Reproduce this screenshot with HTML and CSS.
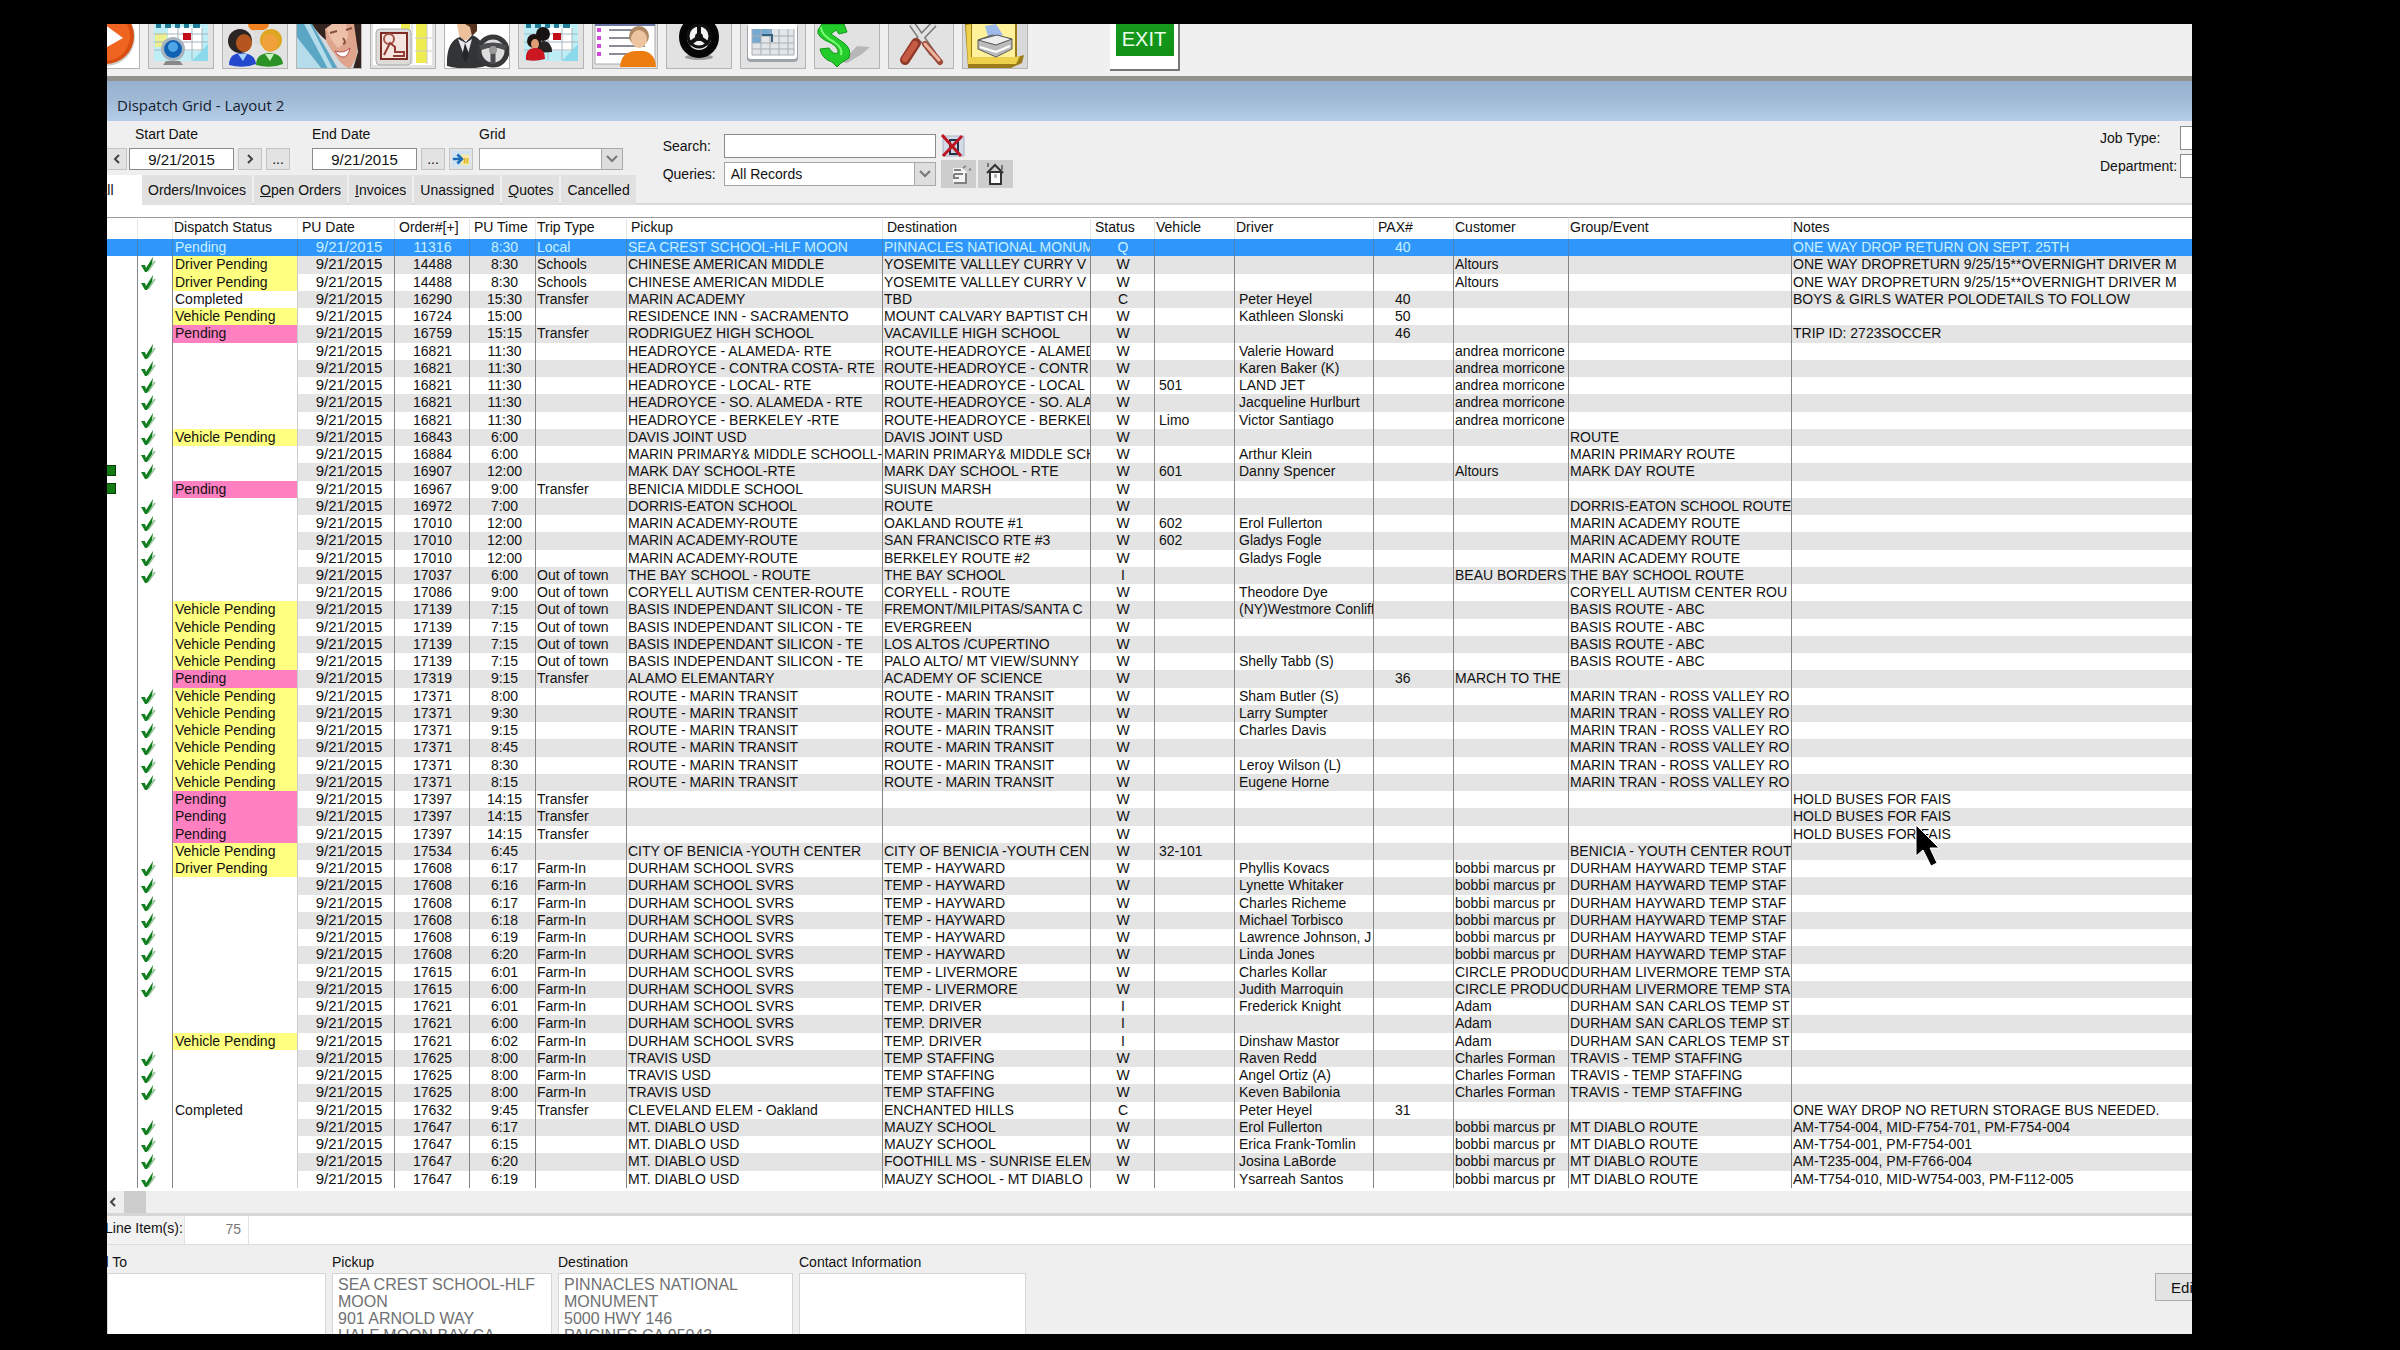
FILE: index.html
```html
<!DOCTYPE html>
<html lang="en">
<head>
<meta charset="utf-8">
<title>Dispatch Grid - Layout 2</title>
<link rel="stylesheet" href="styles.css">
</head>
<body>
<main class="window">
  <nav class="toolbar" aria-label="Main toolbar">
    <button class="tool tool-first" type="button" aria-label="Start"><svg viewBox="0 0 66 45"><rect width="66" height="45" fill="#fff"/><circle cx="32" cy="13" r="29" fill="#ccc"/><circle cx="32" cy="12" r="28" fill="#d94e10"/><circle cx="31" cy="12" r="25" fill="#ee6420"/><path d="M22-6 49 14 22 29z" fill="#fff"/></svg></button>
    <button class="tool" type="button" aria-label="Schedule"><svg viewBox="0 0 66 45"><path d="M6 0h54v37H6z" fill="#bdeef5"/><path d="M20 3h34v24H20z" fill="#fff"/><path d="M7 9h12v14H7z" fill="#eef090"/><path d="M8 2h5m4 0h6m4 0h5m4 0h5m4 0h7" stroke="#227d96" stroke-width="4"/><path d="M6 10h54M6 18h54M6 26h54M30 4v32M44 4v32M54 4v32" stroke="#a5b6c0"/><path d="M44 37 60 20v17z" fill="#8bd9ea"/><path d="M35 9h8v7h-8z" fill="#c40d18"/><path d="M18 37h14l3 4H15z" fill="#888"/><circle cx="25" cy="25" r="12" fill="#a7b3bd"/><circle cx="25" cy="25" r="9" fill="#1262b4"/><circle cx="25" cy="23" r="5" fill="#4fa6e7"/></svg></button>
    <button class="tool" type="button" aria-label="Customers"><svg viewBox="0 0 66 45"><path d="M26 0h21q0 6-11 7-10 0-10-7z" fill="#f28220"/><path d="M32 6h9v15h-9z" fill="#ddd"/><circle cx="18" cy="17" r="12" fill="#2b2523"/><ellipse cx="22" cy="19" rx="8" ry="9" fill="#b5551f"/><path d="M7 41q0-11 11-12 15 0 16 11-12 5-27 1z" fill="#2449cf"/><path d="m16 30 5 7 4-7z" fill="#a9d2fb"/><circle cx="49" cy="16" r="11" fill="#dfa623"/><ellipse cx="48" cy="19" rx="8" ry="9" fill="#f0a13b"/><path d="M34 41q0-11 12-12 14 0 15 11-12 5-27 1z" fill="#2c9226"/><path d="m43 30 5 7 4-7z" fill="#c8f5c0"/></svg></button>
    <button class="tool" type="button" aria-label="Call taker"><svg viewBox="0 0 66 45"><path d="M0 0h66v45H0z" fill="#d5d9dd"/><path d="M0 0h16l26 45H0z" fill="#5aa6c4"/><path d="M0 12 26 45H0zM8 0l24 45h5L14 0z" fill="#b4dcea"/><path d="M24 0h34q6 18 2 34l-6 11q-9-4-14-13Q28 18 24 0z" fill="#dfa58c"/><path d="M30 0h20q4 10 0 18l-8 6Q32 14 30 0z" fill="#edc0aa"/><path d="M16 0h20l-7 5 1 11q-8-6-14-16zM58 0h8v45h-9l5-17z" fill="#34241f"/><path d="M39 27q9 3 15-3-2 10-8 9-5-1-7-6z" fill="#fff" stroke="#b4514d"/><path d="M47 14q4 5 0 6M34 9l7-2M50 6l6-2" stroke="#84513e" stroke-width="2" fill="none"/></svg></button>
    <button class="tool" type="button" aria-label="Reports"><svg viewBox="0 0 66 45"><path d="M3 0h59v41H3z" fill="#fff"/><path d="M46 0h11v39H46zM31 0h9v5h-9z" fill="#eeec4f"/><path d="M57 0v40M42 0v40M45 14h17M45 27h17" stroke="#ccc"/><rect x="6" y="5" width="35" height="36" rx="4" fill="#dedcd9" stroke="#aaa"/><path d="M11 9h26v26H11z" fill="#f6e4df" stroke="#7e2b25" stroke-width="2"/><circle cx="19" cy="15" r="5" fill="none" stroke="#a65348" stroke-width="2"/><path d="m14 31 6-12 5 4v5h9v4H23" stroke="#943c34" stroke-width="2" fill="none"/></svg></button>
    <button class="tool" type="button" aria-label="Drivers"><svg viewBox="0 0 66 45"><path d="M0 0h66v45H0z" fill="#fff"/><path d="M13 0h16l-1 10-5 6h-7z" fill="#ecc09b"/><path d="M21 0h12v7l-5 5-2-9z" fill="#55331f"/><path d="M3 42q-1-25 13-29l6 5 6-7q15 5 14 31-20 5-39 0z" fill="#333436"/><path d="m14 15 8 22 6-22-6 4z" fill="#e8e8ec"/><path d="m21 19-3 13 4 7 3-9z" fill="#25262a"/><circle cx="49" cy="27" r="14" fill="#ddd" stroke="#37393b" stroke-width="5"/><path d="M36 24q13-6 26 0M49 26v14" stroke="#4c4d50" stroke-width="5"/><circle cx="49" cy="26" r="4" fill="#999"/></svg></button>
    <button class="tool" type="button" aria-label="Groups"><svg viewBox="0 0 66 45"><path d="M6 0h54v37H6z" fill="#bdeef5"/><path d="M20 3h34v24H20z" fill="#fff"/><path d="M8 2h5m4 0h6m4 0h5m4 0h5m4 0h7" stroke="#227d96" stroke-width="4"/><path d="M6 10h54M6 18h54M6 26h54M30 4v32M44 4v32M54 4v32" stroke="#a5b6c0"/><path d="M44 37 60 20v17z" fill="#8bd9ea"/><path d="M35 9h8v7h-8z" fill="#c40d18"/><circle cx="25" cy="10" r="7" fill="#171314"/><path d="M18 29q0-12 8-12 8 1 8 11z" fill="#252323"/><circle cx="16" cy="17" r="7" fill="#1f1312"/><ellipse cx="17" cy="20" rx="4" ry="5" fill="#df9f76"/><path d="M8 36q-1-12 9-12 10 0 10 11-10 3-19 1z" fill="#cc1722"/></svg></button>
    <button class="tool" type="button" aria-label="Contacts"><svg viewBox="0 0 66 45"><path d="M3 0h60v40H3z" fill="#fff" stroke="#aaa"/><path d="M3 1h60" stroke="#6d78a5" stroke-width="2"/><path d="M5 6h4m-4 8h4m-4 8h4m-4 8h4" stroke="#d24ad6" stroke-width="4"/><path d="M17 6h36M17 14h36M17 22h36M17 30h24" stroke="#8a8d98" stroke-width="2"/><circle cx="47" cy="12" r="10" fill="#ad8964"/><ellipse cx="47" cy="15" rx="8" ry="9" fill="#ecc49d"/><path d="M28 43q1-15 15-16h9q11 2 12 16z" fill="#ee7d0f"/></svg></button>
    <button class="tool" type="button" aria-label="Vehicles"><svg viewBox="0 0 66 45"><ellipse cx="33" cy="33" rx="14" ry="3" fill="#999"/><ellipse cx="33" cy="13" rx="16" ry="17" fill="#e8e8e8" stroke="#050505" stroke-width="8"/><circle cx="33" cy="12" r="11" fill="#f3f3f3" stroke="#111" stroke-width="3"/><path d="M33 13V2m0 11-10 7m10-7 10 7" stroke="#111" stroke-width="4"/><circle cx="33" cy="13" r="4" fill="#111"/></svg></button>
    <button class="tool" type="button" aria-label="Calendar"><svg viewBox="0 0 66 45"><rect x="7" y="0" width="51" height="38" rx="4" fill="#9da3a8"/><rect x="8" y="-3" width="49" height="38" rx="3" fill="#fff"/><path d="M12 5h42v26H12z" fill="#e3e6e8"/><path d="M12 5h20v7H21v7h-9z" fill="#76a9d0"/><path d="M12 12h42M12 19h42M12 25h42M12 31h42M21 5v26M30 5v26M39 5v26M48 5v26M12 5v26M54 5v26" stroke="#a7adb2"/><path d="M22 11h10v7" stroke="#356283" stroke-width="2" fill="none"/></svg></button>
    <button class="tool" type="button" aria-label="Accounting"><svg viewBox="0 0 66 45"><path d="m28 38 15-16 13 1-8 7-15 9z" fill="#b7b7b7"/><path d="M4 6 8 0h22l3 8-8 2-3-4-5 4 13 9q8 6 5 15l-8 5-4 4-5-5q-10-3-12-13l9-1q4 7 9 5 1-5-7-10Q2 13 4 6z" fill="#23cb2b" stroke="#129719"/><path d="M7 3q0 8 13 15 9 6 7 13" stroke="#7bff72" stroke-width="2" fill="none"/></svg></button>
    <button class="tool" type="button" aria-label="Settings"><svg viewBox="0 0 66 45"><path d="m24 0 21 30M46 0 24 23" stroke="#777" stroke-width="7"/><path d="m24 0 21 30M46 0 24 23" stroke="#e1e1e1" stroke-width="4"/><path d="m28 19-11 17" stroke="#91392a" stroke-width="10" stroke-linecap="round"/><path d="m27 20-10 15" stroke="#c55b43" stroke-width="6" stroke-linecap="round"/><path d="m37 20 15 18" stroke="#9f4938" stroke-width="6" stroke-linecap="round"/><path d="m37 20 14 16" stroke="#edb4a0" stroke-width="3" stroke-linecap="round"/></svg></button>
    <button class="tool" type="button" aria-label="Print"><svg viewBox="0 0 66 45"><path d="M0 0h66v45H0z" fill="#d9d9dc"/><path d="M3 0h52v33l7-2-2 8-11 5H6z" fill="#9c7c18"/><path d="M10 0h43v33H10z" fill="#fff29b"/><path d="m4 1 5-1v33h44l5-1-4 8H6z" fill="#efd04d"/><path d="m23 2 11-2 7 11-14 5z" fill="#9ebbe9"/><path d="m16 16 14-5 20 4v10L34 33l-18-8z" fill="#bbb" stroke="#5b5c58"/><path d="m16 16 18 5 16-6-15-4z" fill="#eee" stroke="#555"/><path d="m18 23 16 5 14-6" fill="none" stroke="#fff" stroke-width="2"/></svg></button>
    <button class="tool-exit" type="button">EXIT</button>
  </nav>

  <header class="titlebar"><h1>Dispatch Grid - Layout 2</h1></header>

  <section class="filters">
    <div class="filters-left">
      <div class="dates">
        <div class="field">
          <label class="label-start" for="start">Start Date</label>
          <div class="controls">
            <button class="btn btn-prev" type="button" aria-label="Previous day"><svg viewBox="0 0 8 10"><path d="M6 1 2 5l4 4"/></svg></button>
            <input class="box date start" id="start" value="9/21/2015">
            <button class="btn" type="button" aria-label="Next day"><svg viewBox="0 0 8 10"><path d="m2 1 4 4-4 4"/></svg></button>
            <button class="btn" type="button">...</button>
          </div>
        </div>
        <div class="field">
          <label for="end">End Date</label>
          <div class="controls">
            <input class="box date" id="end" value="9/21/2015">
            <button class="btn" type="button">...</button>
            <button class="btn" type="button" aria-label="Refresh"><svg class="refresh" viewBox="0 0 24 22"><path d="M2 2h20v18H2z" fill="#cfe3f4"/><path d="M12 6h9v12h-9z" fill="#f7e9a5"/><path d="M3 11h8M8 6l5 5-5 5" stroke="#1f6fb8" stroke-width="3" fill="none"/><path d="M16 16v-6M19 16v-6" stroke="#e1b429" stroke-width="2"/></svg></button>
          </div>
        </div>
        <div class="field field-grid">
          <label for="grid">Grid</label>
          <div class="select grid-select"><select class="box" id="grid"><option></option></select><span class="drop"><svg viewBox="0 0 12 8"><path d="m1 1 5 5 5-5"/></svg></span></div>
        </div>
      </div>
      <div class="tabs" role="tablist">
        <button class="tab tab-active" role="tab" aria-selected="true" type="button">All</button>
        <button class="tab" role="tab" type="button">Orders/Invoices</button>
        <button class="tab" role="tab" type="button"><u>O</u>pen Orders</button>
        <button class="tab" role="tab" type="button"><u>I</u>nvoices</button>
        <button class="tab" role="tab" type="button">Unassigned</button>
        <button class="tab" role="tab" type="button"><u>Q</u>uotes</button>
        <button class="tab" role="tab" type="button">Cancelled</button>
      </div>
    </div>
    <div class="search">
      <div class="search-row">
        <label for="search">Search:</label>
        <input class="box" id="search">
        <button class="clear" type="button" aria-label="Clear search"><svg viewBox="0 0 26 24"><path d="M3 2h21v20H3z" fill="#d3dbe8" stroke="#a9b2c4"/><path d="M10 6h8v14h-8z" fill="#cdd5df" stroke="#26334c" stroke-width="2"/><path d="M2 1 21 22M22 2 3 22" stroke="#bd1723" stroke-width="3"/></svg></button>
      </div>
      <div class="search-row">
        <label for="queries">Queries:</label>
        <div class="select query-select"><select class="box" id="queries"><option>All Records</option></select><span class="drop"><svg viewBox="0 0 12 8"><path d="m1 1 5 5 5-5"/></svg></span></div>
        <button class="query-btn" type="button" aria-label="Edit query"><svg viewBox="0 0 35 28"><path d="M12 8h9l5 4v11H12z" fill="#f4f4f4"/><path d="M13 10h7m-7 4h9m-9 0v4h5m-5 5h12V13" stroke="#808080" stroke-width="2" fill="none"/><path d="m22 8 3-2m3 4 2-1" stroke="#888" stroke-width="2"/></svg></button>
        <button class="query-btn" type="button" aria-label="Query home"><svg viewBox="0 0 35 28"><path d="M12 12h11v12H12z" fill="#fff" stroke="#333" stroke-width="2"/><path d="m9 13 8-8 8 8" fill="none" stroke="#333" stroke-width="2"/><path d="M10 3v4m14-2v5" stroke="#777" stroke-width="2"/><path d="M16 14h3v4h-3z" fill="#bbb"/></svg></button>
      </div>
    </div>
    <div class="job">
      <div class="job-row"><label for="job">Job Type:</label><input class="box" id="job"></div>
      <div class="job-row"><label for="dept">Department:</label><input class="box" id="dept"></div>
    </div>
  </section>

  <section class="grid-wrap">
    <table class="grid">
      <colgroup><col class="c-mark"><col class="c-check"><col class="c-dispatch"><col class="c-date"><col class="c-order"><col class="c-time"><col class="c-trip"><col class="c-pickup"><col class="c-dest"><col class="c-status"><col class="c-vehicle"><col class="c-driver"><col class="c-pax"><col class="c-customer"><col class="c-group"><col></colgroup>
      <thead><tr><th></th><th></th><th>Dispatch Status</th><th class="in">PU Date</th><th class="in">Order#[+]</th><th class="in">PU Time</th><th>Trip Type</th><th class="in">Pickup</th><th class="in">Destination</th><th class="in">Status</th><th>Vehicle</th><th>Driver</th><th class="in">PAX#</th><th>Customer</th><th>Group/Event</th><th>Notes</th></tr></thead>
      <tbody id="rows"></tbody>
    </table>
    <svg class="pointer" viewBox="0 0 26 44" aria-hidden="true"><path d="M1 1v31l7-6 8 16 6-3-7-15h9z" fill="#000" stroke="#fff"/></svg>
  </section>

  <div class="scrollbar"><button class="scroll-left" type="button" aria-label="Scroll left"><svg viewBox="0 0 8 10"><path d="M6 1 2 5l4 4"/></svg></button><span class="thumb"></span></div>

  <div class="summary"><label for="items">Line Item(s):</label><input id="items" value="75" readonly></div>

  <section class="details">
    <div class="pane pane-bill"><label for="bill">Bill To</label><textarea id="bill" readonly></textarea></div>
    <div class="pane pane-pickup"><label for="pickup">Pickup</label><textarea id="pickup" readonly>SEA CREST SCHOOL-HLF MOON
901 ARNOLD WAY
HALF MOON BAY CA</textarea></div>
    <div class="pane pane-dest"><label for="dest">Destination</label><textarea id="dest" readonly>PINNACLES NATIONAL MONUMENT
5000 HWY 146
PAICINES CA 95043</textarea></div>
    <div class="pane pane-contact"><label for="contact">Contact Information</label><textarea id="contact" readonly></textarea></div>
    <button class="edit" type="button">Edit</button>
  </section>
</main>
<script src="app.js"></script>
</body>
</html>
```
FILE: styles.css
```css
* { box-sizing: border-box; }
body {
  margin: 0;
  padding: 24px 208px 17px 107px;
  background: #000;
  color: #111;
  font: 14px/17px "Liberation Sans", Arial, sans-serif;
}
button, input, select, textarea { font: inherit; color: inherit; margin: 0; border-radius: 0; }
button { padding: 0; white-space: nowrap; }
svg { display: block; }
.window { background: #efefef; overflow: hidden; }

.toolbar {
  display: flex;
  gap: 8px;
  height: 57px;
  background: #f0f0f0;
  border-bottom: 5px solid #92938f;
}
.tool {
  flex: none;
  width: 66px;
  height: 45px;
  background: #e2e2e2;
  border: solid #b4b4b4;
  border-width: 0 1px 1px;
  overflow: hidden;
}
.tool svg { width: 66px; height: 45px; margin: 0 -1px; }
.tool-first { margin-left: -33px; }
.tool-exit {
  width: 70px;
  height: 47px;
  margin-left: 74px;
  border: solid #777;
  border-width: 0 2px 2px 0;
  background: linear-gradient(#159a1e, #119116) no-repeat 6px 0 / 58px 32px #fff;
  color: #eaffea;
  font: 20px/30px "Liberation Sans", Arial, sans-serif;
  padding-bottom: 15px;
}

.titlebar {
  padding: 14px 0 6px 10px;
  background: linear-gradient(#97b0d0, #a1bbd6 50%, #b5cde9);
}
.titlebar h1 { margin: 0; font: 15px/20px "Open Sans", "Noto Sans", sans-serif; color: #14202e; }

.filters {
  display: flex;
  align-items: flex-start;
  height: 84px;
  border-bottom: 2px solid #dadada;
}
.dates { display: flex; padding-top: 3px; }
.field { margin-right: 22px; }
.field + .field { margin-right: 6px; }
.field label { display: block; line-height: 20px; margin-bottom: 4px; }
.field .label-start { padding-left: 28px; }
.controls { display: flex; gap: 4px; }
.box { border: 1px solid #8a8a8a; background: #fff; padding: 0; outline: 0; }
.date { width: 105px; height: 22px; text-align: center; font-size: 15px; }
.start { margin-left: -2px; }
.btn {
  display: grid;
  place-items: center;
  width: 24px;
  height: 22px;
  background: #e3e3e3;
  border: 1px solid #c4c4c4;
}
.btn-prev { width: 20px; border-left: 0; }
.btn svg, .scroll-left svg, .drop svg { width: 8px; height: 10px; fill: none; stroke: #444; stroke-width: 2; }
.btn .refresh { width: 22px; height: 20px; stroke: none; }
.select { display: grid; position: relative; }
.select select { appearance: none; width: 100%; height: 22px; padding-left: 6px; border-color: #a5a5a5; }
.drop {
  position: absolute;
  right: 0;
  top: 0;
  bottom: 0;
  display: grid;
  place-items: center;
  width: 22px;
  background: #dedede;
  border: 1px solid #a9a9a9;
  pointer-events: none;
}
.drop svg { width: 12px; height: 8px; stroke: #777; }
.grid-select { width: 144px; }
.tabs { display: flex; gap: 2px; margin-top: 5px; }
.tab { height: 30px; padding: 0 6px; border: 0; background: #e1e1e1; line-height: 30px; }
.tab-active { width: 35px; margin-right: -2px; padding: 0; background: #fff; text-align: left; text-indent: -9px; line-height: 24px; overflow: hidden; }

.search { display: grid; gap: 2px; margin: 13px 0 0 27px; }
.search-row { display: flex; align-items: center; height: 24px; }
.search-row + .search-row { height: 28px; }
.search-row label { width: 61px; }
.search-row input { width: 212px; height: 24px; }
.query-select { width: 212px; margin-right: 5px; }
.query-select select { height: 24px; }
.clear { width: 26px; height: 24px; margin-left: 4px; border: 0; background: none; }
.query-btn { width: 35px; height: 28px; margin-right: 2px; border: 0; background: #cdcdcd; }

.job { display: grid; gap: 4px; margin: 5px 0 0 auto; }
.job-row { display: flex; align-items: center; height: 24px; }
.job-row label { width: 80px; }
.job-row input { width: 12px; height: 24px; border-right: 0; }

.grid-wrap { position: relative; padding: 12px 0 3px; background: #fff; }
.grid { width: 100%; table-layout: fixed; border-collapse: separate; border-spacing: 0; }
.c-mark { width: 31px; }
.c-check { width: 35px; }
.c-dispatch { width: 125px; }
.c-date { width: 97px; }
.c-order { width: 75px; }
.c-time { width: 66px; }
.c-trip { width: 91px; }
.c-pickup { width: 256px; }
.c-dest { width: 208px; }
.c-status { width: 64px; }
.c-vehicle { width: 80px; }
.c-driver { width: 139px; }
.c-pax { width: 80px; }
.c-customer { width: 115px; }
.c-group { width: 223px; }
.grid th {
  height: 22px;
  padding: 0 0 2px 1px;
  border-top: 1px solid #9a9a9a;
  border-right: 1px solid #e6e6e6;
  font-weight: normal;
  text-align: left;
  white-space: nowrap;
  overflow: hidden;
}
.grid th.in { padding-left: 4px; }
.grid td {
  height: 17px;
  padding: 0 0 0 1px;
  border-right: 1px solid #858585;
  line-height: 16px;
  vertical-align: top;
  white-space: nowrap;
  overflow: hidden;
}
.grid tr:nth-child(4n+2) td { height: 18px; }
.grid th:last-child, .grid td:last-child { border-right: 0; }
.grid tr:nth-child(even) td:nth-child(n+4) { background: #e4e4e4; }
.grid td:nth-child(1) { padding: 2px 0 0; }
.grid td:nth-child(2) { padding-left: 2px; }
.grid td:nth-child(3) { padding-left: 2px; border-right-color: #ccc; }
.grid td:nth-child(4) { padding-left: 6px; text-align: center; font-size: 15px; }
.grid td:nth-child(5), .grid td:nth-child(6), .grid td:nth-child(10) { text-align: center; }
.grid td:nth-child(6) { padding-left: 4px; }
.grid td:nth-child(11), .grid td:nth-child(12) { padding-left: 4px; }
.grid td:nth-child(13) { padding-left: 21px; }
.grid .yellow { background: #ffff80; }
.grid .pink { background: #ff80c0; }
.grid .selected td { background: #2f96fc; color: #c9f1ff; border-right-color: #4a83b8; }
.check { width: 16px; height: 16px; }
.mark { display: block; width: 9px; height: 11px; background: #117a11; border: 1px solid #063c06; border-left: 0; }
.pointer { position: absolute; left: 1808px; top: 619px; width: 26px; height: 44px; }

.scrollbar { display: flex; height: 25px; border-bottom: 3px solid #d6d6d6; }
.scroll-left { width: 17px; border: 0; background: none; }
.scroll-left svg { margin-left: 2px; }
.thumb { width: 22px; background: #cdcdcd; }

.summary { display: flex; height: 29px; background: #fff; border-bottom: 1px solid #dcdcdc; line-height: 25px; }
.summary label { width: 77px; background: #f2f2f2; white-space: nowrap; text-indent: -2px; }
.summary input { width: 65px; padding: 0 7px 2px 0; border: solid #e2e2e2; border-width: 0 1px; background: #fff; color: #777; text-align: right; }

.details { display: flex; align-items: flex-start; gap: 6px; height: 89px; overflow: hidden; }
.pane { padding-top: 7px; }
.pane label { display: block; line-height: 20px; margin-bottom: 1px; }
.pane textarea {
  display: block;
  width: 100%;
  height: 80px;
  padding: 2px 5px;
  border: 1px solid #d5d5d5;
  background: #fff;
  color: #6f7173;
  font-size: 16px;
  line-height: 17px;
  resize: none;
  overflow: hidden;
}
.pane-bill { width: 219px; }
.pane-bill label { text-indent: -17px; }
.pane-pickup { width: 220px; }
.pane-dest { width: 235px; }
.pane-contact { width: 227px; }
.edit {
  width: 58px;
  height: 28px;
  margin: 28px -21px 0 auto;
  border: 1px solid #adadad;
  background: #e3e3e3;
  font-size: 15px;
}
```
FILE: app.js
```js
// Fields: flags|dispatch status|order|time|trip|pickup|destination|status|vehicle|driver|pax|customer|group|notes
// Flags: c = confirmed tick, m = green marker at the row start
const data = `
|Pending|11316|8:30|Local|SEA CREST SCHOOL-HLF MOON|PINNACLES NATIONAL MONUM|Q|||40|||ONE WAY DROP RETURN ON SEPT. 25TH
c|Driver Pending|14488|8:30|Schools|CHINESE AMERICAN MIDDLE|YOSEMITE VALLLEY CURRY V|W||||Altours||ONE WAY DROPRETURN 9/25/15**OVERNIGHT DRIVER M
c|Driver Pending|14488|8:30|Schools|CHINESE AMERICAN MIDDLE|YOSEMITE VALLLEY CURRY V|W||||Altours||ONE WAY DROPRETURN 9/25/15**OVERNIGHT DRIVER M
|Completed|16290|15:30|Transfer|MARIN ACADEMY|TBD|C||Peter Heyel|40|||BOYS & GIRLS WATER POLODETAILS TO FOLLOW
|Vehicle Pending|16724|15:00||RESIDENCE INN - SACRAMENTO|MOUNT CALVARY BAPTIST CH|W||Kathleen Slonski|50|||
|Pending|16759|15:15|Transfer|RODRIGUEZ HIGH SCHOOL|VACAVILLE HIGH SCHOOL|W|||46|||TRIP ID: 2723SOCCER
c||16821|11:30||HEADROYCE - ALAMEDA- RTE|ROUTE-HEADROYCE - ALAMED|W||Valerie Howard||andrea morricone||
c||16821|11:30||HEADROYCE - CONTRA COSTA- RTE|ROUTE-HEADROYCE - CONTR|W||Karen Baker (K)||andrea morricone||
c||16821|11:30||HEADROYCE - LOCAL- RTE|ROUTE-HEADROYCE - LOCAL|W|501|LAND JET||andrea morricone||
c||16821|11:30||HEADROYCE - SO. ALAMEDA - RTE|ROUTE-HEADROYCE - SO. ALA|W||Jacqueline Hurlburt||andrea morricone||
c||16821|11:30||HEADROYCE - BERKELEY -RTE|ROUTE-HEADROYCE - BERKEL|W|Limo|Victor Santiago||andrea morricone||
c|Vehicle Pending|16843|6:00||DAVIS JOINT USD|DAVIS JOINT USD|W|||||ROUTE|
c||16884|6:00||MARIN PRIMARY& MIDDLE SCHOOLL-|MARIN PRIMARY& MIDDLE SCH|W||Arthur Klein|||MARIN PRIMARY ROUTE|
cm||16907|12:00||MARK DAY SCHOOL-RTE|MARK DAY SCHOOL - RTE|W|601|Danny Spencer||Altours|MARK DAY ROUTE|
m|Pending|16967|9:00|Transfer|BENICIA MIDDLE SCHOOL|SUISUN MARSH|W||||||
c||16972|7:00||DORRIS-EATON SCHOOL|ROUTE|W|||||DORRIS-EATON SCHOOL ROUTE|
c||17010|12:00||MARIN ACADEMY-ROUTE|OAKLAND ROUTE #1|W|602|Erol Fullerton|||MARIN ACADEMY ROUTE|
c||17010|12:00||MARIN ACADEMY-ROUTE|SAN FRANCISCO RTE #3|W|602|Gladys Fogle|||MARIN ACADEMY ROUTE|
c||17010|12:00||MARIN ACADEMY-ROUTE|BERKELEY ROUTE #2|W||Gladys Fogle|||MARIN ACADEMY ROUTE|
c||17037|6:00|Out of town|THE BAY SCHOOL - ROUTE|THE BAY SCHOOL|I||||BEAU BORDERS|THE BAY SCHOOL ROUTE|
||17086|9:00|Out of town|CORYELL AUTISM CENTER-ROUTE|CORYELL - ROUTE|W||Theodore Dye|||CORYELL AUTISM CENTER ROU|
|Vehicle Pending|17139|7:15|Out of town|BASIS INDEPENDANT SILICON - TE|FREMONT/MILPITAS/SANTA C|W||(NY)Westmore Conliff|||BASIS ROUTE - ABC|
|Vehicle Pending|17139|7:15|Out of town|BASIS INDEPENDANT SILICON - TE|EVERGREEN|W|||||BASIS ROUTE - ABC|
|Vehicle Pending|17139|7:15|Out of town|BASIS INDEPENDANT SILICON - TE|LOS ALTOS /CUPERTINO|W|||||BASIS ROUTE - ABC|
|Vehicle Pending|17139|7:15|Out of town|BASIS INDEPENDANT SILICON - TE|PALO ALTO/ MT VIEW/SUNNY|W||Shelly Tabb (S)|||BASIS ROUTE - ABC|
|Pending|17319|9:15|Transfer|ALAMO ELEMANTARY|ACADEMY OF SCIENCE|W|||36|MARCH TO THE||
c|Vehicle Pending|17371|8:00||ROUTE - MARIN TRANSIT|ROUTE - MARIN TRANSIT|W||Sham Butler (S)|||MARIN TRAN - ROSS VALLEY RO|
c|Vehicle Pending|17371|9:30||ROUTE - MARIN TRANSIT|ROUTE - MARIN TRANSIT|W||Larry Sumpter|||MARIN TRAN - ROSS VALLEY RO|
c|Vehicle Pending|17371|9:15||ROUTE - MARIN TRANSIT|ROUTE - MARIN TRANSIT|W||Charles Davis|||MARIN TRAN - ROSS VALLEY RO|
c|Vehicle Pending|17371|8:45||ROUTE - MARIN TRANSIT|ROUTE - MARIN TRANSIT|W|||||MARIN TRAN - ROSS VALLEY RO|
c|Vehicle Pending|17371|8:30||ROUTE - MARIN TRANSIT|ROUTE - MARIN TRANSIT|W||Leroy Wilson (L)|||MARIN TRAN - ROSS VALLEY RO|
c|Vehicle Pending|17371|8:15||ROUTE - MARIN TRANSIT|ROUTE - MARIN TRANSIT|W||Eugene Horne|||MARIN TRAN - ROSS VALLEY RO|
|Pending|17397|14:15|Transfer|||W||||||HOLD BUSES FOR FAIS
|Pending|17397|14:15|Transfer|||W||||||HOLD BUSES FOR FAIS
|Pending|17397|14:15|Transfer|||W||||||HOLD BUSES FOR FAIS
|Vehicle Pending|17534|6:45||CITY OF BENICIA -YOUTH CENTER|CITY OF BENICIA -YOUTH CEN|W|32-101||||BENICIA - YOUTH CENTER ROUT|
c|Driver Pending|17608|6:17|Farm-In|DURHAM SCHOOL SVRS|TEMP - HAYWARD|W||Phyllis Kovacs||bobbi marcus pr|DURHAM HAYWARD TEMP STAF|
c||17608|6:16|Farm-In|DURHAM SCHOOL SVRS|TEMP - HAYWARD|W||Lynette Whitaker||bobbi marcus pr|DURHAM HAYWARD TEMP STAF|
c||17608|6:17|Farm-In|DURHAM SCHOOL SVRS|TEMP - HAYWARD|W||Charles Richeme||bobbi marcus pr|DURHAM HAYWARD TEMP STAF|
c||17608|6:18|Farm-In|DURHAM SCHOOL SVRS|TEMP - HAYWARD|W||Michael Torbisco||bobbi marcus pr|DURHAM HAYWARD TEMP STAF|
c||17608|6:19|Farm-In|DURHAM SCHOOL SVRS|TEMP - HAYWARD|W||Lawrence Johnson, J||bobbi marcus pr|DURHAM HAYWARD TEMP STAF|
c||17608|6:20|Farm-In|DURHAM SCHOOL SVRS|TEMP - HAYWARD|W||Linda Jones||bobbi marcus pr|DURHAM HAYWARD TEMP STAF|
c||17615|6:01|Farm-In|DURHAM SCHOOL SVRS|TEMP - LIVERMORE|W||Charles Kollar||CIRCLE PRODUC|DURHAM LIVERMORE TEMP STA|
c||17615|6:00|Farm-In|DURHAM SCHOOL SVRS|TEMP - LIVERMORE|W||Judith Marroquin||CIRCLE PRODUC|DURHAM LIVERMORE TEMP STA|
||17621|6:01|Farm-In|DURHAM SCHOOL SVRS|TEMP. DRIVER|I||Frederick Knight||Adam|DURHAM SAN CARLOS TEMP ST|
||17621|6:00|Farm-In|DURHAM SCHOOL SVRS|TEMP. DRIVER|I||||Adam|DURHAM SAN CARLOS TEMP ST|
|Vehicle Pending|17621|6:02|Farm-In|DURHAM SCHOOL SVRS|TEMP. DRIVER|I||Dinshaw Mastor||Adam|DURHAM SAN CARLOS TEMP ST|
c||17625|8:00|Farm-In|TRAVIS USD|TEMP STAFFING|W||Raven Redd||Charles Forman|TRAVIS - TEMP STAFFING|
c||17625|8:00|Farm-In|TRAVIS USD|TEMP STAFFING|W||Angel Ortiz (A)||Charles Forman|TRAVIS - TEMP STAFFING|
c||17625|8:00|Farm-In|TRAVIS USD|TEMP STAFFING|W||Keven Babilonia||Charles Forman|TRAVIS - TEMP STAFFING|
|Completed|17632|9:45|Transfer|CLEVELAND ELEM - Oakland|ENCHANTED HILLS|C||Peter Heyel|31|||ONE WAY DROP NO RETURN STORAGE BUS NEEDED.
c||17647|6:17||MT. DIABLO USD|MAUZY SCHOOL|W||Erol Fullerton||bobbi marcus pr|MT DIABLO ROUTE|AM-T754-004, MID-F754-701, PM-F754-004
c||17647|6:15||MT. DIABLO USD|MAUZY SCHOOL|W||Erica Frank-Tomlin||bobbi marcus pr|MT DIABLO ROUTE|AM-T754-001, PM-F754-001
c||17647|6:20||MT. DIABLO USD|FOOTHILL MS - SUNRISE ELEM|W||Josina LaBorde||bobbi marcus pr|MT DIABLO ROUTE|AM-T235-004, PM-F766-004
c||17647|6:19||MT. DIABLO USD|MAUZY SCHOOL - MT DIABLO|W||Ysarreah Santos||bobbi marcus pr|MT DIABLO ROUTE|AM-T754-010, MID-W754-003, PM-F112-005
`.trim().split("\n");

const tick = '<svg class="check" viewBox="0 0 16 16"><path d="m8 15 7-10" stroke="#9bc79f" stroke-width="2"/><path d="M1 9h4l1 3 7-11-1 7-5 8H5z" fill="#117d1e"/></svg>';
const body = document.getElementById("rows");

data.forEach((line, i) => {
  const [flags, status, ...rest] = line.split("|");
  const row = body.insertRow();
  if (i === 0) row.className = "selected";
  row.insertCell().innerHTML = flags.includes("m") ? '<span class="mark"></span>' : "";
  row.insertCell().innerHTML = flags.includes("c") ? tick : "";
  const cell = row.insertCell();
  cell.textContent = status;
  if (status === "Pending") cell.className = "pink";
  else if (status.endsWith("Pending")) cell.className = "yellow";
  ["9/21/2015", ...rest].forEach(text => { row.insertCell().textContent = text; });
});
```
